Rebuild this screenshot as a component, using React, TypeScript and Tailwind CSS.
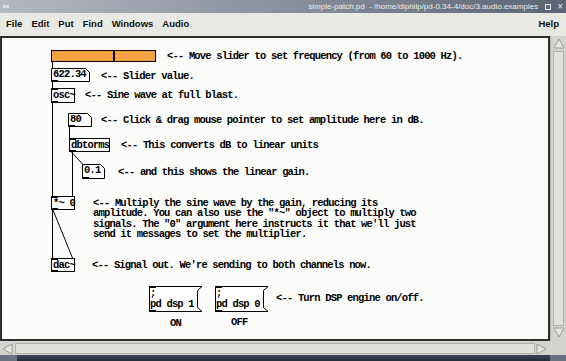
import React from 'react';

const mono = "font-['Liberation_Mono','Courier_New',monospace] text-[10.5px] font-bold tracking-[-0.83px] text-black";

// pd object box: plain rectangle with inlet/outlet marks
const ObjBox = ({ pos, label }: { pos: string; label: string }) => (
  <div className={`absolute ${pos} border border-black bg-white ${mono} leading-[12px] pl-[1px] whitespace-pre`}>
    <span className="absolute -top-[1px] -left-[1px] h-[2px] w-[7px] bg-black" />
    <span className="absolute -bottom-[1px] -left-[1px] h-[2px] w-[7px] bg-black" />
    {label}
  </div>
);

const Comment = ({ pos, children }: { pos: string; children: React.ReactNode }) => (
  <div className={`absolute ${pos} ${mono} leading-[10.3px] whitespace-pre`}>{children}</div>
);

// message box with the flag-shaped right edge
const MsgBox = ({ pos, label }: { pos: string; label: string }) => (
  <div className={`absolute ${pos} h-[26px] w-[49px] ${mono} leading-[10.5px] pl-[1px] pt-[2px] whitespace-pre`}>
    <svg className="absolute inset-0 overflow-visible" width="49" height="26">
      <polygon points="0.5,0.5 53,0.5 48.5,4.5 48.5,21.5 53,25.5 0.5,25.5" fill="white" stroke="black" strokeWidth="1" />
      <rect x="0" y="0" width="7" height="2" fill="black" />
      <rect x="0" y="24" width="7" height="2" fill="black" />
    </svg>
    <span className="relative block">{';\n' + label}</span>
  </div>
);

// number atom: rectangle with the top right corner cut off
const Atom = ({ pos, w, h, label }: { pos: string; w: number; h: number; label: string }) => (
  <div className={`absolute ${pos} ${mono} leading-[13px] pl-[2px] whitespace-pre`}>
    <svg className="absolute left-0 top-0 overflow-visible" width={w} height={h}>
      <polygon
        points={`0.5,0.5 ${w - 4.5},0.5 ${w - 0.5},4.5 ${w - 0.5},${h - 0.5} 0.5,${h - 0.5}`}
        fill="white"
        stroke="black"
        strokeWidth="1"
      />
      <rect x="0" y={h - 2} width="7" height="2" fill="black" />
    </svg>
    <span className="relative">{label}</span>
  </div>
);

const Arrow = ({ dir }: { dir: 'up' | 'down' | 'left' | 'right' }) => {
  const pts = {
    up: '1,10 6,1 11,10',
    down: '1,1 6,10 11,1',
    left: '10,1 1,6 10,11',
    right: '1,1 10,6 1,11',
  }[dir];
  return (
    <svg width="12" height="12" className="shrink-0">
      <polygon points={pts} fill="#e4e4e0" stroke="#9c9c98" strokeWidth="1" />
    </svg>
  );
};

export default function App() {
  return (
    <div className="flex h-[361px] w-[566px] flex-col overflow-hidden bg-[#d6d6d2]">
      {/* title bar */}
      <div className="flex h-[13px] items-center bg-gradient-to-r from-[#b4b8c0] via-[#8a909c] to-[#5c6474] pl-[3px] pr-[3px] font-['Liberation_Sans',Arial,sans-serif] text-[8px] text-[#ececec]">
        <div className="h-[3px] w-[6px] bg-[#dcdcdc]" />
        <div className="ml-auto mr-[7px] whitespace-pre">simple-patch.pd  - /home/dlphilp/pd-0.34-4/doc/3.audio.examples</div>
        <div className="mr-[6px] h-[6px] w-[6px] border border-[#e8e8e8]" />
        <div className="text-[10px] leading-none">×</div>
      </div>

      {/* menu bar */}
      <div className="flex h-[23px] items-center gap-[9px] bg-[#e8e8e4] pl-[6px] pr-[7px] font-['Liberation_Sans',Arial,sans-serif] text-[9.5px] font-bold text-[#111]">
        <span>File</span>
        <span>Edit</span>
        <span>Put</span>
        <span>Find</span>
        <span>Windows</span>
        <span>Audio</span>
        <span className="ml-auto">Help</span>
      </div>

      {/* canvas + vertical scrollbar */}
      <div className="flex h-[306px]">
        <div className="relative h-[305px] w-[550px] border-2 border-[#2e2e2e] bg-[#fcfcfa]">
          <svg className="absolute inset-0 h-full w-full" stroke="black" strokeWidth="1">
            <line x1="50.5" y1="24" x2="50.5" y2="30" />
            <line x1="50.5" y1="44" x2="50.5" y2="50" />
            <line x1="50.5" y1="65" x2="50.5" y2="158" />
            <line x1="67.5" y1="89" x2="67.5" y2="100" />
            <line x1="69.5" y1="114" x2="80.5" y2="126" />
            <line x1="70.5" y1="114" x2="70.5" y2="158" />
            <line x1="50.5" y1="172" x2="50.5" y2="220" />
            <line x1="51" y1="172" x2="70.5" y2="220" />
          </svg>

          {/* slider */}
          <div className="absolute left-[49px] top-[12px] h-[12px] w-[105px] border border-black bg-[#f2a040]">
            <div className="absolute left-[61px] top-0 h-full w-[2px] bg-black" />
          </div>
          <Comment pos="left-[165px] top-[13px]">{'<-- Move slider to set frequency (from 60 to 1000 Hz).'}</Comment>

          <Atom pos="left-[49px] top-[30px]" w={39} h={14} label="622.34" />
          <Comment pos="left-[99px] top-[33px]">{'<-- Slider value.'}</Comment>

          <ObjBox pos="left-[49px] top-[50px] h-[15px] w-[24px]" label="osc~" />
          <Comment pos="left-[83px] top-[52px]">{'<-- Sine wave at full blast.'}</Comment>

          <Atom pos="left-[66px] top-[75px]" w={24} h={14} label="80" />
          <Comment pos="left-[99px] top-[77px]">{'<-- Click & drag mouse pointer to set amplitude here in dB.'}</Comment>

          <ObjBox pos="left-[67px] top-[100px] h-[14px] w-[41px]" label="dbtorms" />
          <Comment pos="left-[119px] top-[102px]">{'<-- This converts dB to linear units'}</Comment>

          <Atom pos="left-[80px] top-[126px]" w={23} h={15} label="0.1" />
          <Comment pos="left-[116px] top-[129px]">{'<-- and this shows the linear gain.'}</Comment>

          <ObjBox pos="left-[49px] top-[158px] h-[14px] w-[24px]" label="*~ 0" />
          <Comment pos="left-[91px] top-[160px]">
            {'<-- Multiply the sine wave by the gain, reducing its\namplitude. You can also use the "*~" object to multiply two\nsignals. The "0" argument here instructs it that we\'ll just\nsend it messages to set the multiplier.'}
          </Comment>

          <ObjBox pos="left-[49px] top-[220px] h-[14px] w-[24px]" label="dac~" />
          <Comment pos="left-[90px] top-[222px]">{"<-- Signal out. We're sending to both channels now."}</Comment>

          <MsgBox pos="left-[147px] top-[248px]" label="pd dsp 1" />
          <MsgBox pos="left-[213px] top-[248px]" label="pd dsp 0" />
          <Comment pos="left-[274px] top-[255px]">{'<-- Turn DSP engine on/off.'}</Comment>

          <Comment pos="left-[168px] top-[280px]">ON</Comment>
          <Comment pos="left-[229px] top-[279px]">OFF</Comment>
        </div>

        <div className="flex h-[305px] flex-1 flex-col items-center border-l border-[#b4b4b0] bg-[#d2d2ce] py-[2px]">
          <Arrow dir="up" />
          <div className="my-[1px] w-[11px] flex-1 border border-[#b0b0ac] bg-[#e0e0dc]" />
          <Arrow dir="down" />
        </div>
      </div>

      {/* horizontal scrollbar */}
      <div className="flex h-[13px] items-center bg-[#d2d2ce] px-[2px]">
        <Arrow dir="left" />
        <div className="mx-[1px] h-[11px] w-[520px] border border-[#b0b0ac] bg-[#e0e0dc]" />
        <Arrow dir="right" />
      </div>

      {/* task bar strip */}
      <div className="flex flex-1">
        <div className="w-[17px] bg-[#6c7282]" />
        <div className="flex-1 bg-gradient-to-b from-[#3c4454] to-[#262c38]" />
        <div className="w-[16px] bg-[#6c7282]" />
      </div>
    </div>
  );
}
